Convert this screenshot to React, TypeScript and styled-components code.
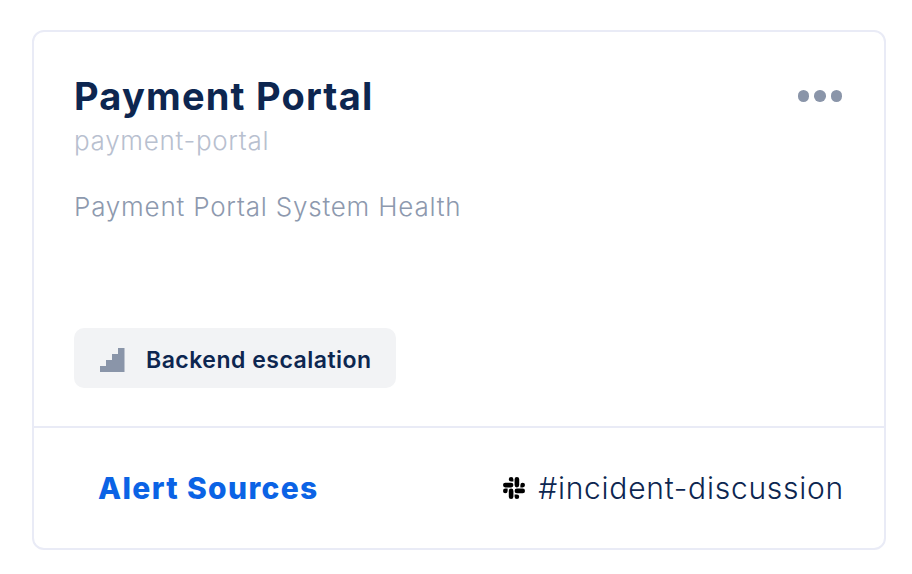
import React from "react";
import styled, { createGlobalStyle } from "styled-components";
import { SiSlack } from "react-icons/si";

const GlobalStyle = createGlobalStyle`
  html, body {
    margin: 0;
    padding: 0;
    background: #fff;
    font-family: Inter, "Liberation Sans", sans-serif;
  }
`;

const StairsIcon = () => (
  <svg width="26" height="26" viewBox="0 0 26 26" fill="#8a95a9">
    <path d="M1 25V19H7V13H13V7H19V1H25.5V25Z" />
  </svg>
);

export default function App() {
  return (
    <Page>
      <GlobalStyle />
      <Card>
        <Body>
          <Header>
            <Title>Payment Portal</Title>
            <Dots>
              <Dot />
              <Dot />
              <Dot />
            </Dots>
          </Header>
          <Slug>payment-portal</Slug>
          <Description>Payment Portal System Health</Description>
          <Policy>
            <StairsIcon />
            <PolicyName>Backend escalation</PolicyName>
          </Policy>
        </Body>
        <Footer>
          <SourcesLink>Alert Sources</SourcesLink>
          <Channel>
            <SiSlack size={22} color="#000" />
            <span>#incident-discussion</span>
          </Channel>
        </Footer>
      </Card>
    </Page>
  );
}

const Page = styled.div`
  width: 912px;
  height: 574px;
  box-sizing: border-box;
  padding: 30px 26px 24px 32px;
  overflow: hidden;
`;

const Card = styled.div`
  height: 520px;
  box-sizing: border-box;
  display: flex;
  flex-direction: column;
  border: 2px solid #e9ebf6;
  border-radius: 12px;
  background: #fff;
`;

const Body = styled.div`
  flex: 1;
  display: flex;
  flex-direction: column;
  align-items: flex-start;
  padding: 36px 42px 38px 40px;
  border-bottom: 2px solid #e9ebf6;
`;

const Header = styled.div`
  align-self: stretch;
  display: flex;
  justify-content: space-between;
  align-items: center;
`;

const Title = styled.h1`
  margin: 0;
  font-size: 38px;
  line-height: 56px;
  font-weight: 650;
  letter-spacing: 1.2px;
  color: #0d2650;
`;

const Dots = styled.div`
  display: flex;
  gap: 5px;
`;

const Dot = styled.span`
  width: 11.5px;
  height: 11.5px;
  border-radius: 50%;
  background: #8a95a9;
`;

const Slug = styled.div`
  font-size: 26px;
  line-height: 34px;
  font-weight: 350;
  letter-spacing: 0.7px;
  color: #b8c0cf;
`;

const Description = styled.p`
  margin: 32px 0 0;
  font-size: 26px;
  line-height: 34px;
  font-weight: 300;
  letter-spacing: 0.8px;
  color: #8d99ae;
`;

const Policy = styled.div`
  margin-top: auto;
  height: 60px;
  box-sizing: border-box;
  display: flex;
  align-items: center;
  gap: 21px;
  padding: 4px 24px 0 25px;
  border-radius: 10px;
  background: #f2f3f5;
`;

const PolicyName = styled.span`
  font-size: 23px;
  font-weight: 600;
  letter-spacing: 0.5px;
  color: #0d2650;
`;

const Footer = styled.div`
  height: 120px;
  box-sizing: border-box;
  display: flex;
  justify-content: space-between;
  align-items: center;
  padding: 0 40px 0 64px;
`;

const SourcesLink = styled.a`
  font-size: 30px;
  font-weight: 800;
  letter-spacing: 1.35px;
  color: #0b63e5;
`;

const Channel = styled.div`
  display: flex;
  align-items: center;
  gap: 13px;
  font-size: 30px;
  font-weight: 300;
  letter-spacing: 0.75px;
  color: #0d2650;
`;
